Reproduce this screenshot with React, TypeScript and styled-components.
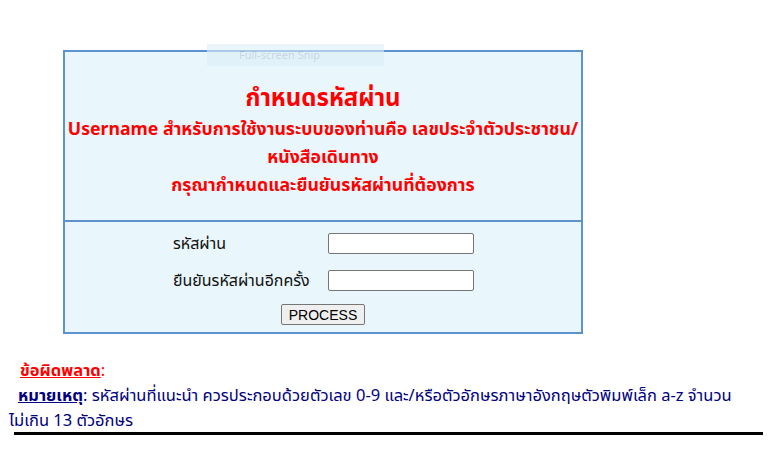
import React from 'react';
import styled, { createGlobalStyle } from 'styled-components';

const GlobalStyle = createGlobalStyle`
  html, body {
    margin: 0;
    padding: 0;
    background: #fff;
  }
  body {
    font-family: "Noto Sans", "Noto Sans Thai", "Liberation Sans", sans-serif;
  }
`;

const Page = styled.div`
  position: relative;
  width: 775px;
  height: 464px;
  padding-top: 50px;
  box-sizing: border-box;
`;

const Panel = styled.div`
  width: 520px;
  margin-left: 63px;
  border: 2px solid #5e92cc;
  box-sizing: border-box;
  background: #e9f6fb;
`;

const Header = styled.div`
  height: 170px;
  border-bottom: 2px solid #5e92cc;
  display: flex;
  flex-direction: column;
  align-items: center;
  padding-top: 28px;
  box-sizing: border-box;
  color: #ff0000;
  text-align: center;
  font-weight: bold;
`;

const Title = styled.div`
  font-size: 24px;
  line-height: 34px;
`;

const Sub = styled.div`
  font-size: 17.7px;
  line-height: 28px;
  white-space: nowrap;
`;

const Form = styled.div`
  height: 110px;
  display: flex;
  flex-direction: column;
  align-items: center;
  padding-top: 3px;
  box-sizing: border-box;
`;

const Row = styled.div`
  display: flex;
  align-items: center;
  width: 302px;
  margin-left: 2px;
  height: 37px;
`;

const Label = styled.label`
  width: 155px;
  font-size: 16px;
  color: #111;
`;

const Input = styled.input`
  width: 146px;
  height: 21px;
  box-sizing: border-box;
  border: 1px solid #767676;
  border-radius: 2px;
  background: #fff;
`;

const Button = styled.button`
  margin-top: 5px;
  height: 21px;
  padding: 0 7px;
  font-family: "Liberation Sans", Arial, sans-serif;
  font-size: 14px;
  color: #000;
  background: #efefef;
  border: 1px solid #767676;
  border-radius: 2px;
`;

const Notes = styled.div`
  margin-top: 23px;
  padding-left: 9px;
  padding-right: 10px;
  font-size: 16.5px;
  line-height: 25px;
  color: #000080;
  white-space: nowrap;
`;

const ErrorLabel = styled.span`
  margin-left: 11px;
  color: #ff0000;
  font-weight: bold;
  text-decoration: underline;
`;

const Colon = styled.span<{ $red?: boolean }>`
  color: ${(p) => (p.$red ? '#ff0000' : 'inherit')};
`;

const NoteLabel = styled.span`
  margin-left: 9px;
  font-weight: bold;
  text-decoration: underline;
`;

const Rule = styled.div`
  margin: 0 12px 0 14px;
  height: 3px;
  background: #000;
`;

const Snip = styled.div`
  position: absolute;
  left: 207px;
  top: 44px;
  width: 177px;
  height: 22px;
  background: rgba(220, 238, 250, 0.6);
  color: rgba(120, 120, 140, 0.25);
  font-family: "Noto Sans", sans-serif;
  font-size: 11px;
  line-height: 22px;
  padding-left: 32px;
  box-sizing: border-box;
`;

export default function App() {
  return (
    <Page>
      <GlobalStyle />
      <Panel>
        <Header>
          <Title>กำหนดรหัสผ่าน</Title>
          <Sub>Username สำหรับการใช้งานระบบของท่านคือ เลขประจำตัวประชาชน/</Sub>
          <Sub>หนังสือเดินทาง</Sub>
          <Sub>กรุณากำหนดและยืนยันรหัสผ่านที่ต้องการ</Sub>
        </Header>
        <Form>
          <Row>
            <Label>รหัสผ่าน</Label>
            <Input type="password" />
          </Row>
          <Row>
            <Label>ยืนยันรหัสผ่านอีกครั้ง</Label>
            <Input type="password" />
          </Row>
          <Button>PROCESS</Button>
        </Form>
      </Panel>
      <Notes>
        <div>
          <ErrorLabel>ข้อผิดพลาด</ErrorLabel>
          <Colon $red>:</Colon>
        </div>
        <div>
          <NoteLabel>หมายเหตุ</NoteLabel>
          <Colon>: รหัสผ่านที่แนะนำ ควรประกอบด้วยตัวเลข 0-9 และ/หรือตัวอักษรภาษาอังกฤษตัวพิมพ์เล็ก a-z จำนวน</Colon>
          <br />
          ไม่เกิน 13 ตัวอักษร
        </div>
      </Notes>
      <Rule />
      <Snip>Full-screen Snip</Snip>
    </Page>
  );
}
